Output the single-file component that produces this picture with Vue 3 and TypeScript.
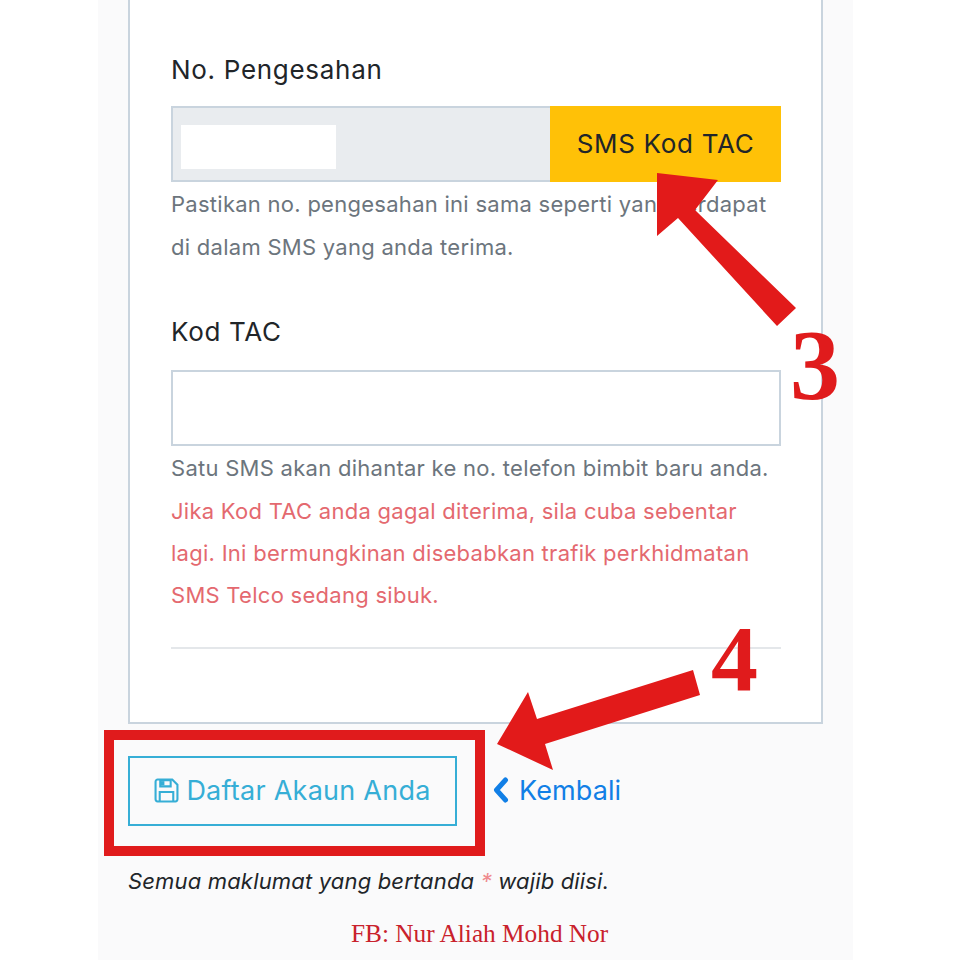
<script setup lang="ts">
const redNote = [
  'Jika Kod TAC anda gagal diterima, sila cuba sebentar',
  'lagi. Ini bermungkinan disebabkan trafik perkhidmatan',
  'SMS Telco sedang sibuk.',
]
</script>

<template>
  <div class="page">
    <main class="column">
      <section class="card">
        <label class="label first">No. Pengesahan</label>
        <div class="group">
          <div class="readonly"><span class="redact"></span></div>
          <button class="sms" type="button">SMS Kod TAC</button>
        </div>
        <p class="help lead">Pastikan no. pengesahan ini sama seperti yang terdapat<br />di dalam SMS yang anda terima.</p>

        <label class="label second">Kod TAC</label>
        <input class="field" type="text" />
        <p class="help tight">Satu SMS akan dihantar ke no. telefon bimbit baru anda.</p>
        <p class="help danger">
          <template v-for="line in redNote" :key="line">{{ line }}<br /></template>
        </p>
        <hr class="rule" />
      </section>

      <div class="actions">
        <button class="save" type="button">
          <svg class="disk" viewBox="0 0 24 24" aria-hidden="true">
            <path d="M3.500 1.500h14l5 5v14a2 2 0 0 1-2 2h-17a2 2 0 0 1-2-2v-17a2 2 0 0 1 2-2z" fill="none" stroke="currentColor" stroke-width="2" />
            <path d="M6 2h10v6H6z" fill="none" stroke="currentColor" stroke-width="2" />
            <path d="M6 3h4v4H6z" fill="currentColor" />
            <path d="M5.500 22v-8.500h13V22" fill="none" stroke="currentColor" stroke-width="2" />
          </svg>
          <span>Daftar Akaun Anda</span>
        </button>
        <a class="back">
          <svg class="chev" viewBox="0 0 16 26" aria-hidden="true">
            <path d="M13 3 4 13l9 10" fill="none" stroke="currentColor" stroke-width="5" stroke-linecap="round" stroke-linejoin="round" />
          </svg>
          <span>Kembali</span>
        </a>
      </div>

      <p class="note">Semua maklumat yang bertanda <span class="star">*</span> wajib diisi.</p>
      <p class="credit">FB: Nur Aliah Mohd Nor</p>
    </main>

    <div class="box"></div>
    <svg class="arrows" viewBox="0 0 960 960" aria-hidden="true">
      <polygon points="657,173 718,180 695,210 796,308 777,326 678,218 657,236" />
      <polygon points="693,670 700,695 545,744 553,770 497,744 528,692 537,719" />
    </svg>
    <span class="num three">3</span>
    <span class="num four">4</span>
  </div>
</template>

<style>
html, body { margin: 0; background: #fff; }
</style>

<style scoped>
.page {
  position: relative;
  width: 960px;
  height: 960px;
  overflow: hidden;
  background: #fff;
  font-family: Inter, "Noto Sans", sans-serif;
  color: #212529;
}
.column {
  box-sizing: border-box;
  width: 755px;
  height: 960px;
  margin-left: 98px;
  padding: 0 30px;
  background: #fafafb;
}
.card {
  box-sizing: border-box;
  height: 724px;
  padding: 0 40px 0 41px;
  background: #fff;
  border: 2px solid #c9d4de;
  border-top: 0;
}
.label {
  display: block;
  font-size: 26px;
  line-height: 36px;
  letter-spacing: 0.7px;
}
.label.first { padding-top: 52px; }
.label.second { margin-top: 45px; }
.group {
  display: flex;
  height: 76px;
  margin-top: 18px;
}
.readonly {
  box-sizing: border-box;
  flex: 1;
  padding: 17px 8px;
  background: #e9ecef;
  border: 2px solid #c9d4de;
  border-right: 0;
}
.redact {
  display: block;
  width: 155px;
  height: 44px;
  background: #fff;
}
.sms {
  width: 231px;
  padding: 0 0 2px;
  border: 0;
  background: #ffc107;
  color: #212529;
  font: inherit;
  font-size: 26px;
  letter-spacing: 0.7px;
}
.help {
  margin: 0;
  color: #6c757d;
  font-size: 22px;
  line-height: 43px;
  letter-spacing: 0.27px;
  white-space: nowrap;
}
.lead { margin-top: 1px; }
.tight { margin-top: 1px; }
.field {
  display: block;
  box-sizing: border-box;
  width: 610px;
  height: 76px;
  margin-top: 20px;
  background: #fff;
  border: 2px solid #c9d4de;
  border-radius: 0;
}
.danger { color: #e4696f; line-height: 42px; }
.rule {
  margin: 31px 0 0;
  border: 0;
  border-top: 2px solid #e4e7ea;
}
.actions {
  display: flex;
  align-items: center;
  gap: 35px;
  margin-top: 32px;
}
.save {
  display: flex;
  align-items: center;
  justify-content: center;
  gap: 7px;
  box-sizing: border-box;
  width: 329px;
  height: 70px;
  padding: 0 0 2px;
  background: transparent;
  border: 2px solid #36aed6;
  color: #36aed6;
  font: inherit;
  font-size: 27px;
  letter-spacing: 0.25px;
}
.disk { width: 25px; height: 25px; }
.back {
  display: flex;
  align-items: center;
  gap: 10px;
  padding-bottom: 2px;
  color: #117fe6;
  font-size: 27px;
  letter-spacing: 0.1px;
}
.chev { width: 17px; height: 26px; }
.note {
  margin: 40px 0 0;
  font-size: 22px;
  font-style: italic;
  line-height: 30px;
  letter-spacing: 0.17px;
}
.star { color: #ef8a8e; }
.credit {
  margin: 22px 0 0 223px;
  font-family: "Liberation Serif", serif;
  font-size: 25.3px;
  line-height: 30px;
  color: #c9212c;
}
.box {
  position: absolute;
  left: 104px;
  top: 730px;
  box-sizing: border-box;
  width: 381px;
  height: 126px;
  border: 10px solid #e01b1c;
}
.arrows {
  position: absolute;
  inset: 0;
  width: 960px;
  height: 960px;
  fill: #e21a1a;
}
.num {
  position: absolute;
  font-family: "Liberation Serif", serif;
  font-weight: 700;
  color: #e01b1c;
  line-height: 1;
}
.three { left: 790px; top: 315px; font-size: 100px; }
.four { left: 711px; top: 611px; font-size: 94px; }
</style>
